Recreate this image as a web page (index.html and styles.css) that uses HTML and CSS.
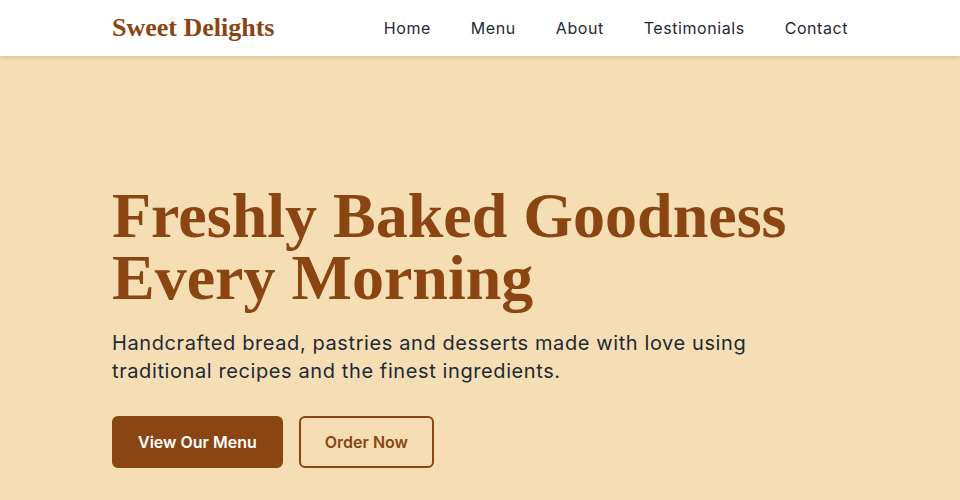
FILE: index.html
```html
<!DOCTYPE html>
<html lang="en">
<head>
   <meta charset="UTF-8">
   <meta name="viewport" content="width=device-width, initial-scale=1.0">
   <title>Sweet Delights</title>
   <link rel="stylesheet" href="styles.css">
</head>
<body>
   <header class="site-header">
      <div class="container nav-bar">
         <a href="#" class="logo">Sweet Delights</a>
         <nav class="nav-links">
            <a href="#">Home</a>
            <a href="#">Menu</a>
            <a href="#">About</a>
            <a href="#">Testimonials</a>
            <a href="#">Contact</a>
         </nav>
      </div>
   </header>

   <section class="hero">
      <div class="container">
         <h1>Freshly Baked Goodness Every Morning</h1>
         <p>Handcrafted bread, pastries and desserts made with love using traditional recipes and the finest ingredients.</p>
         <div class="hero-buttons">
            <a href="#" class="btn btn-primary">View Our Menu</a>
            <a href="#" class="btn btn-outline">Order Now</a>
         </div>
      </div>
   </section>
</body>
</html>
```

FILE: styles.css
```css
* {
   box-sizing: border-box;
}
body {
   margin: 0;
   font-family: "Inter", "Liberation Sans", sans-serif;
   color: #1f2937;
   background: #f5deb3;
}
a {
   text-decoration: none;
   color: inherit;
}
.container {
   width: 736px;
   margin-left: auto;
   margin-right: auto;
}
.site-header {
   background: #fff;
   height: 56px;
   box-shadow: 0 2px 5px rgba(0, 0, 0, 0.12);
   position: relative;
}
.nav-bar {
   height: 56px;
   display: flex;
   justify-content: space-between;
   align-items: center;
}
.logo {
   font-family: "Liberation Serif", serif;
   font-weight: bold;
   font-size: 26px;
   color: #8b4513;
}
.nav-links {
   display: flex;
   gap: 40px;
}
.nav-links a {
   font-size: 16px;
   letter-spacing: 0.56px;
   color: #1f2937;
}
.hero {
   padding-top: 129px;
   padding-bottom: 60px;
}
.hero h1 {
   font-family: "Liberation Serif", serif;
   font-weight: bold;
   font-size: 64px;
   line-height: 62px;
   color: #8b4513;
   margin: 0 0 20px 0;
   max-width: 700px;
}
.hero p {
   font-size: 20px;
   line-height: 28px;
   letter-spacing: 0.6px;
   margin: 0 0 31px 0;
   max-width: 660px;
}
.hero-buttons {
   display: flex;
   gap: 16px;
}
.btn {
   display: inline-block;
   font-size: 16px;
   font-weight: 600;
   line-height: 24px;
   padding: 12px 24px;
   border: 2px solid #8b4513;
   border-radius: 6px;
}
.btn-primary {
   background: #8b4513;
   color: #fff;
}
.btn-outline {
   color: #8b4513;
}
```
